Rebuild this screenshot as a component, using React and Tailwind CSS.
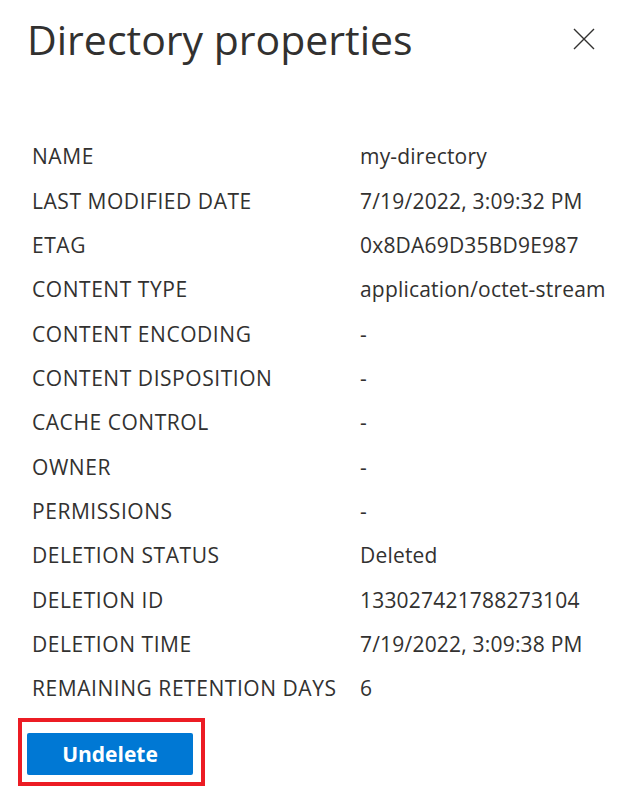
const rows = [
  ['NAME', 'my-directory'],
  ['LAST MODIFIED DATE', '7/19/2022, 3:09:32 PM'],
  ['ETAG', '0x8DA69D35BD9E987'],
  ['CONTENT TYPE', 'application/octet-stream'],
  ['CONTENT ENCODING', '-'],
  ['CONTENT DISPOSITION', '-'],
  ['CACHE CONTROL', '-'],
  ['OWNER', '-'],
  ['PERMISSIONS', '-'],
  ['DELETION STATUS', 'Deleted'],
  ['DELETION ID', '133027421788273104'],
  ['DELETION TIME', '7/19/2022, 3:09:38 PM'],
  ['REMAINING RETENTION DAYS', '6'],
];

export default function App() {
  return (
    <div className="w-[642px] h-[789px] bg-white text-[#323130] overflow-hidden" style={{ fontFamily: '"Open Sans", "Noto Sans", sans-serif' }}>
      {/* Header */}
      <div className="flex items-center justify-between pl-[27px] pr-[46px] pt-[8px] h-[70px]">
        <h1 className="text-[41px] leading-[52px] font-normal">Directory properties</h1>
        <button className="w-[24px] h-[24px] flex items-center justify-center text-[#323130]">
          <svg width="22" height="22" viewBox="0 0 22 22" fill="none" stroke="currentColor" strokeWidth="1.4">
            <path d="M1 1L21 21M21 1L1 21" />
          </svg>
        </button>
      </div>

      {/* Properties */}
      <div className="pl-[32px] pt-[65px]">
        {rows.map(([label, value]) => (
          <div key={label} className="flex items-center h-[44.33px] text-[21px]">
            <div className="w-[328px] shrink-0 tracking-[0.55px]">{label}</div>
            <div className="tracking-[0.2px]">{value}</div>
          </div>
        ))}
      </div>

      {/* Action */}
      <div className="pl-[18px] pt-[7px]">
        <div className="inline-block border-4 border-[#ec1c24] pl-[5px] pr-[8px] pt-[11px] pb-[7px]">
          <button className="w-[166px] h-[42px] rounded-[2px] bg-[#0078d4] text-white text-[21px] font-bold">
            Undelete
          </button>
        </div>
      </div>
    </div>
  );
}
